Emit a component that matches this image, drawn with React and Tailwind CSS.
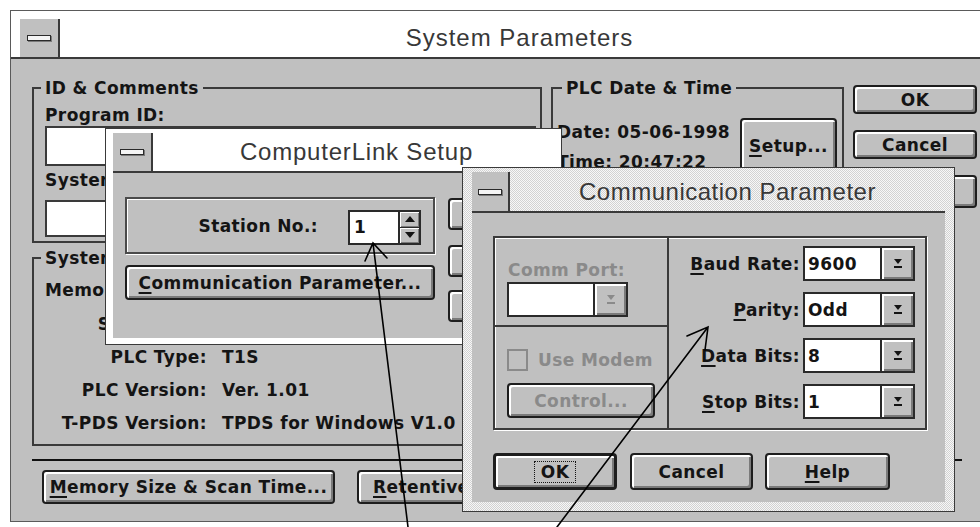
import React from 'react';

const txt = "font-['DejaVu_Sans','Liberation_Sans',sans-serif] font-bold text-[17px] leading-[20px] tracking-[0.4px] whitespace-nowrap";
const title = "font-['Liberation_Sans',Arial,sans-serif] text-[24px] leading-[28px] text-[#383838] whitespace-nowrap";
const bevel = "bg-[#c0c0c0] border-2 border-[#1e1e1e] rounded-[4px] shadow-[inset_2px_2px_0_#ffffff,inset_-2px_-2px_0_#7a7a7a]";
const dots = "bg-[repeating-conic-gradient(#d2d2d2_0%_25%,#f7f7f7_0%_50%)] bg-[length:2px_2px]";

const U = ({ children }) => <span className="underline underline-offset-[3px] decoration-[1.5px]">{children}</span>;

function SysMenu({ className = '' }) {
  return (
    <div className={`shrink-0 flex items-center justify-center bg-[#c0c0c0] border-r-2 border-[#3a3a3a] ${className}`}>
      <div className="w-[24px] h-[6px] border border-[#2a2a2a] bg-[#f4f4f4] shadow-[1px_1px_0_#7a7a7a]" />
    </div>
  );
}

function Btn({ children, className = '', disabled, isDefault }) {
  return (
    <div
      className={`flex items-center justify-center ${bevel} ${txt} ${isDefault ? 'border-[3px]' : ''} ${
        disabled ? 'text-[#8a8a8a]' : 'text-[#141414]'
      } ${className}`}
    >
      {children}
    </div>
  );
}

function Combo({ value, className = '', disabled }) {
  return (
    <div className={`flex h-[35px] border-2 border-[#2a2a2a] ${className}`}>
      <div className={`flex-1 bg-white flex items-center pl-[3px] ${txt} text-[#141414]`}>{value}</div>
      <div className="w-[33px] border-l-2 border-[#2a2a2a] bg-[#c0c0c0] shadow-[inset_2px_2px_0_#ffffff,inset_-2px_-2px_0_#7a7a7a] flex items-center justify-center">
        <svg width="10" height="13" viewBox="0 0 10 13">
          <path d="M1 2h8L5 7z" fill={disabled ? '#8a8a8a' : '#141414'} />
          <rect x="1" y="9" width="8" height="2" fill={disabled ? '#8a8a8a' : '#141414'} />
        </svg>
      </div>
    </div>
  );
}

function MainWindow() {
  const info = [
    ['Scan Time:', ''],
    ['PLC Type:', 'T1S'],
    ['PLC Version:', 'Ver. 1.01'],
    ['T-PDS Version:', 'TPDS for Windows V1.0'],
  ];
  return (
    <div className="absolute left-[10px] top-[10px] w-[990px] h-[512px] flex flex-col bg-[#c0c0c0] border border-[#5a5a5a]">
      <div className="h-[48px] shrink-0 flex items-end pl-[9px] bg-white border-b-2 border-[#3a3a3a]">
        <SysMenu className="w-[40px] h-[38px]" />
        <div className={`flex-1 h-[38px] flex items-center justify-center pr-[20px] tracking-[1px] ${title}`}>System Parameters</div>
      </div>

      <div className="flex-1 flex flex-col pl-[21px] pt-[19px] text-[#141414]">
        <div className="flex items-start">
          {/* left column */}
          <div className="w-[510px] shrink-0 flex flex-col">
            <fieldset className="border-2 border-[#3a3a3a] pl-[11px] pr-[4px] pb-[4px]">
              <legend className={`-ml-[4px] px-[4px] ${txt}`}>ID &amp; Comments</legend>
              <div className={`mt-[7px] ${txt}`}>Program ID:</div>
              <div className="mt-[1px] h-[40px] w-[491px] bg-white border-2 border-[#3a3a3a]" />
              <div className={`mt-[4px] ${txt}`}>System Comment:</div>
              <div className="mt-[10px] h-[37px] w-[491px] bg-white border-2 border-[#3a3a3a]" />
            </fieldset>

            <fieldset className="mt-[5px] border-2 border-[#3a3a3a] pl-[11px] pr-[4px] pb-[5px]">
              <legend className={`-ml-[4px] px-[4px] ${txt}`}>System Information</legend>
              <div className={`mt-[6px] h-[33px] leading-[33px] ${txt}`}>Memory Size:</div>
              {info.map(([k, v]) => (
                <div key={k} className={`h-[33px] flex items-center ${txt}`}>
                  <span className="w-[162px] text-right">{k}</span>
                  <span className="ml-[15px]">{v}</span>
                </div>
              ))}
            </fieldset>
          </div>

          {/* date & time */}
          <fieldset className="ml-[9px] w-[293px] shrink-0 border-2 border-[#3a3a3a] pl-[4px] pr-[5px] pb-[40px]">
            <legend className={`ml-[5px] px-[4px] ${txt}`}>PLC Date &amp; Time</legend>
            <div className="flex items-start">
              <div className="flex flex-col mt-[24px]">
                <div className={txt}>Date: 05-06-1998</div>
                <div className={`mt-[10px] ${txt}`}>Time: 20:47:22</div>
              </div>
              <Btn className="ml-auto mt-[20px] w-[97px] h-[56px]">
                <U>S</U>etup...
              </Btn>
            </div>
          </fieldset>

          {/* buttons */}
          <div className="ml-[9px] w-[124px] shrink-0 flex flex-col">
            <Btn className="mt-[7px] h-[29px]">OK</Btn>
            <Btn className="mt-[16px] h-[29px]">Cancel</Btn>
            <Btn className="mt-[16px] h-[33px]">
              <U>H</U>elp
            </Btn>
          </div>
        </div>

        <div className="mt-[13px] w-[930px] h-[2px] bg-[#111]" />

        <div className="mt-[9px] flex">
          <Btn className="ml-[10px] w-[293px] h-[34px]">
            <U>M</U>emory Size &amp; Scan Time...
          </Btn>
          <Btn className="ml-[22px] w-[220px] h-[34px] justify-start pl-[14px]">
            <U>R</U>etentive Memory...
          </Btn>
        </div>
      </div>
    </div>
  );
}

function LinkDialog() {
  return (
    <div className="absolute left-[105px] top-[128px] w-[457px] h-[217px] flex flex-col bg-white border border-[#3a3a3a] px-[7px] pb-[6px]">
      <div className="h-[44px] shrink-0 flex items-end border-b-2 border-[#3a3a3a]">
        <SysMenu className="w-[40px] h-[38px]" />
        <div className={`flex-1 h-[38px] flex items-center justify-center pl-[6px] tracking-[0.8px] ${title}`}>ComputerLink Setup</div>
      </div>
      <div className="flex-1 flex bg-[#c0c0c0] pl-[12px] pt-[24px]">
        <div className="w-[310px] shrink-0 flex flex-col">
          <div className="h-[57px] flex items-center justify-end pr-[12px] border-2 border-[#4a4a4a] shadow-[inset_1px_1px_0_#ffffff,1px_1px_0_#ffffff]">
            <span className={`${txt} text-[#141414]`}>Station No.:</span>
            <div className="ml-[30px] flex h-[35px] mt-[3px]">
              <div className={`w-[52px] bg-white border-2 border-[#2a2a2a] flex items-center pl-[4px] ${txt} text-[#141414]`}>1</div>
              <div className="w-[21px] flex flex-col border-2 border-l-0 border-[#2a2a2a] bg-[#c0c0c0]">
                <div className="flex-1 flex items-center justify-center border-b border-[#2a2a2a] shadow-[inset_1px_1px_0_#ffffff,inset_-1px_-1px_0_#7a7a7a]">
                  <svg width="10" height="6" viewBox="0 0 10 6"><path d="M5 0L10 6H0z" fill="#141414" /></svg>
                </div>
                <div className="flex-1 flex items-center justify-center shadow-[inset_1px_1px_0_#ffffff,inset_-1px_-1px_0_#7a7a7a]">
                  <svg width="10" height="6" viewBox="0 0 10 6"><path d="M0 0h10L5 6z" fill="#141414" /></svg>
                </div>
              </div>
            </div>
          </div>
          <Btn className="mt-[11px] h-[35px]">
            <U>C</U>ommunication Parameter...
          </Btn>
        </div>
        <div className="ml-[13px] w-[100px] shrink-0 flex flex-col">
          <Btn className="mt-[1px] h-[32px]">OK</Btn>
          <Btn className="mt-[15px] h-[32px]">Cancel</Btn>
          <Btn className="mt-[13px] h-[32px]">
            <U>H</U>elp
          </Btn>
        </div>
      </div>
    </div>
  );
}

function CommDialog() {
  const rows = [
    ['B', 'aud Rate:', '9600'],
    ['P', 'arity:', 'Odd'],
    ['D', 'ata Bits:', '8'],
    ['S', 'top Bits:', '1'],
  ];
  return (
    <div className={`absolute left-[462px] top-[167px] w-[493px] h-[345px] flex flex-col border border-[#3a3a3a] px-[9px] pt-[4px] pb-[9px] ${dots}`}>
      <div className="h-[41px] shrink-0 flex items-stretch border-b-2 border-[#3a3a3a]">
        <SysMenu className="w-[38px]" />
        <div className={`flex-1 flex items-center justify-center tracking-[0.5px] ${title}`}>Communication Parameter</div>
      </div>
      <div className="flex-1 flex flex-col bg-[#c0c0c0] pl-[21px] pt-[23px]">
        <div className="w-[434px] h-[194px] flex border-2 border-[#3a3a3a] shadow-[inset_1px_1px_0_#ffffff,1px_1px_0_#ffffff]">
          <div className="w-[174px] shrink-0 flex flex-col border-r-2 border-[#3a3a3a]">
            <div className="h-[89px] shrink-0 flex flex-col pl-[12px] pt-[22px] border-b-2 border-[#3a3a3a]">
              <div className={`pl-[1px] ${txt} text-[#8a8a8a]`}>Comm Port:</div>
              <Combo className="mt-[2px] w-[121px]" disabled />
            </div>
            <div className="flex-1 flex flex-col pl-[12px] pt-[22px]">
              <div className="flex items-center h-[22px]">
                <div className="w-[21px] h-[22px] border-2 border-[#8a8a8a]" />
                <span className={`ml-[10px] ${txt} text-[#8a8a8a]`}>Use Modem</span>
              </div>
              <Btn disabled className="mt-[12px] w-[148px] h-[35px]">Control...</Btn>
            </div>
          </div>
          <div className="flex-1 flex flex-col items-end pr-[10px] pt-[8px] gap-[11px]">
            {rows.map(([a, rest, v]) => (
              <div key={a} className="flex items-center">
                <span className={`${txt} text-[#141414]`}>
                  <U>{a}</U>
                  {rest}
                </span>
                <Combo value={v} className="ml-[3px] w-[112px]" />
              </div>
            ))}
          </div>
        </div>
        <div className="mt-[23px] flex">
          <Btn isDefault className="w-[124px] h-[37px]">
            <span className="border border-dotted border-[#141414] px-[6px] leading-[20px]">OK</span>
          </Btn>
          <Btn className="ml-[13px] w-[123px] h-[37px]">Cancel</Btn>
          <Btn className="ml-[12px] w-[125px] h-[37px]">
            <U>H</U>elp
          </Btn>
        </div>
      </div>
    </div>
  );
}

function Arrows() {
  return (
    <svg className="absolute left-0 top-0 pointer-events-none" width="980" height="527" viewBox="0 0 980 527">
      <g stroke="#000" strokeWidth="1.6" fill="none" strokeLinecap="round">
        <path d="M408 527L373 243M365 261L373 243L387 258" />
        <path d="M557 527L708 327M687 336L708 327L705 350" />
      </g>
    </svg>
  );
}

export default function App() {
  return (
    <div className="relative w-[980px] h-[527px] overflow-hidden bg-white">
      <MainWindow />
      <LinkDialog />
      <CommDialog />
      <Arrows />
    </div>
  );
}
